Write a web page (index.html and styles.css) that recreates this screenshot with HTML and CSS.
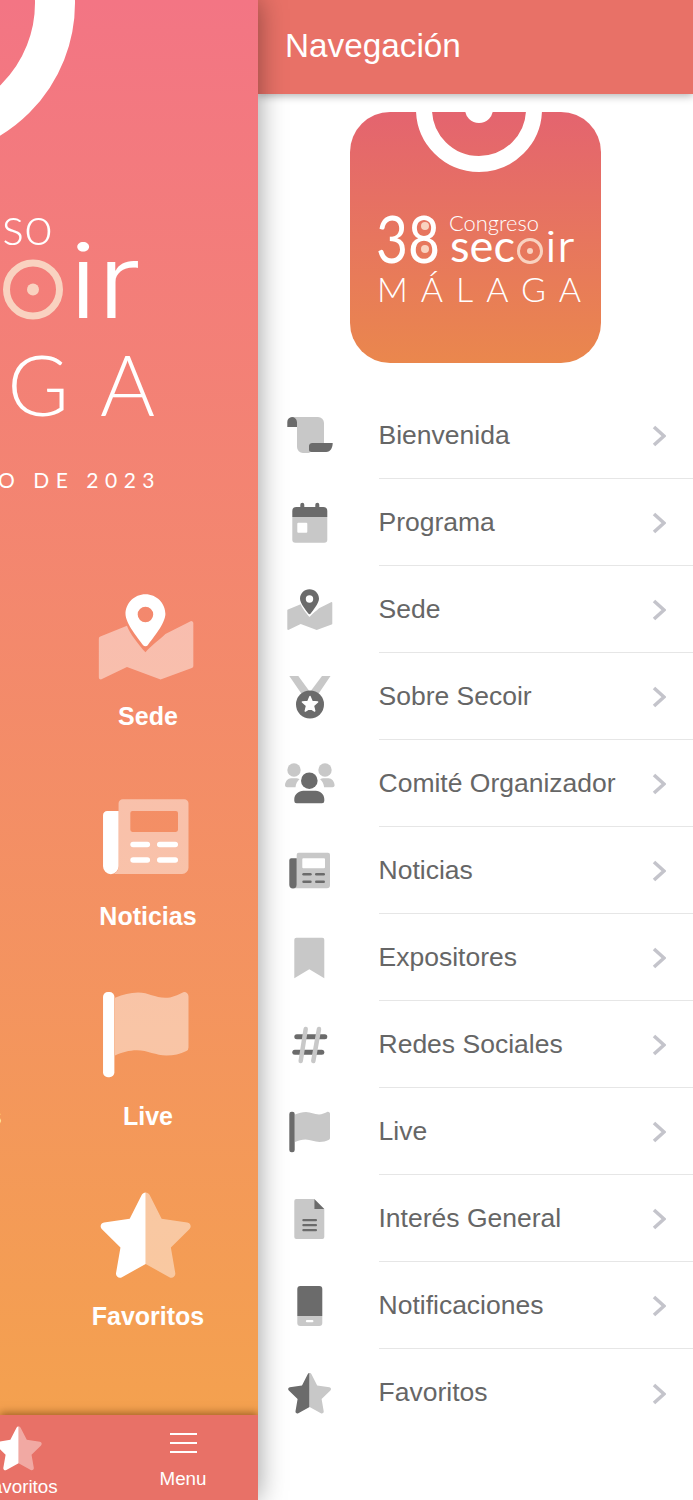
FILE: index.html
```html
<!DOCTYPE html>
<html lang="es">
<head>
  <meta charset="UTF-8">
  <meta name="viewport" content="width=device-width, initial-scale=1.0">
  <title>38 Congreso Secoir</title>
  <link rel="stylesheet" href="styles.css">
</head>
<body>

<svg class="sprites" width="0" height="0" aria-hidden="true">
  <symbol id="i-scroll" viewBox="0 0 50 50">
    <path class="light" d="M7 7h26a6 6 0 0 1 6 6v20H27a3 3 0 0 0-3 3v3a2.600 2.600 0 0 0 2 2.700c-1 .8-2 1.300-4 1.300h-4a6 6 0 0 1-6-6V12a5 5 0 0 0-5-5z"/>
    <path class="dark" d="M27 33h20.700c0 4.500-2 9-6.500 9H26.500a2.600 2.600 0 0 1-2.500-3v-3a3 3 0 0 1 3-3z"/>
    <path class="dark" d="M7 7a5 5 0 0 1 5 5v5H2.300v-5A5 5 0 0 1 7 7z"/>
  </symbol>
  <symbol id="i-calendar" viewBox="0 0 50 50">
    <path class="light" fill-rule="evenodd" d="M7.300 20h35v22.700a3 3 0 0 1-3 3h-29a3 3 0 0 1-3-3zM13.300 25.700a1 1 0 0 0-1 1v8a1 1 0 0 0 1 1h8a1 1 0 0 0 1-1v-8a1 1 0 0 0-1-1z"/>
    <path class="dark" d="M7.300 20v-6a4 4 0 0 1 4-4h4V7.700a2 2 0 0 1 4 0V10h11V7.700a2 2 0 0 1 4 0V10h4a4 4 0 0 1 4 4v6z"/>
  </symbol>
  <symbol id="i-map" viewBox="0 0 50 50">
    <path class="light" d="M3 25.500l12.700-5.200c1.300 3.700 5.300 8.700 8.800 12.700 3.500-4 7-6 9.500-8.700l12-6.100a1 1 0 0 1 1.300 1v20.300a1 1 0 0 1-.7 1L31.700 46l-16-6-12.400 6a1 1 0 0 1-1-1V26.500a1 1 0 0 1 .7-1z"/>
    <path class="dark" fill-rule="evenodd" d="M24.500 5.300c5.300 0 9.500 4.200 9.500 9.500 0 4.500-6.300 12-8.300 14.700a1.500 1.500 0 0 1-2.400 0C21.300 26.800 15 19.300 15 14.800c0-5.300 4.200-9.500 9.500-9.500zM24.500 11.300a3.700 3.700 0 1 0 0 7.400 3.700 3.700 0 0 0 0-7.400z"/>
  </symbol>
  <symbol id="i-medal" viewBox="0 0 50 50">
    <path class="light" d="M4.300 5h9L25 21 37 5h8.500L32 25H18z"/>
    <circle class="dark" cx="25" cy="33.500" r="14"/>
    <polygon fill="#fff" stroke="#fff" stroke-width="1.500" stroke-linejoin="round" points="25,25.500 27.100,30.600 32.600,31 28.400,34.600 29.700,40 25,37.100 20.300,40 21.600,34.600 17.400,31 22.900,30.600"/>
  </symbol>
  <symbol id="i-people" viewBox="0 0 50 50">
    <circle class="light" cx="9" cy="12" r="6.700"/>
    <circle class="light" cx="40" cy="12" r="6.700"/>
    <path class="light" d="M0 27.500c0-4 3-7.200 6-7.200h5.500c1 0 2 .5 3 1-2 1.500-3.700 4.500-4 8H2a2 2 0 0 1-2-1.800z"/>
    <path class="light" d="M49.600 27.500c0-4-3-7.200-6-7.200h-5.500c-1 0-2 .5-3 1 2 1.500 3.700 4.500 4 8h8.500a2 2 0 0 0 2-1.800z"/>
    <circle class="dark" cx="24.300" cy="22.700" r="8.300"/>
    <path class="dark" d="M9.300 43a2.300 2.300 0 0 0 2.300 2.300H37a2.300 2.300 0 0 0 2.300-2.300v-2c0-4.500-4-8.300-8.500-8.300H18.300c-4.500 0-9 3.800-9 8.300z"/>
  </symbol>
  <symbol id="i-news" viewBox="0 0 50 50">
    <path class="light" fill-rule="evenodd" d="M13.700 7.700H43a2 2 0 0 1 2 2v30.600a3 3 0 0 1-3 3H9.500c1.400-.8 2.200-2 2.200-3.500V9.700a2 2 0 0 1 2-2zM18.300 13.300a1 1 0 0 0-1 1v8a1 1 0 0 0 1 1H39a1 1 0 0 0 1-1v-8a1 1 0 0 0-1-1z"/>
    <path class="dark" d="M6.300 13.300h5.400v26.400a3.700 3.700 0 0 1-7.400 0V15.300a2 2 0 0 1 2-2z"/>
    <rect class="dark" x="17.300" y="28" width="9.400" height="2.600" rx="1.300"/>
    <rect class="dark" x="30" y="28" width="10" height="2.600" rx="1.300"/>
    <rect class="dark" x="17.300" y="35.400" width="9.400" height="2.600" rx="1.300"/>
    <rect class="dark" x="30" y="35.400" width="10" height="2.600" rx="1.300"/>
  </symbol>
  <symbol id="i-bookmark" viewBox="0 0 50 50">
    <path class="light" d="M11.300 5.700h26a2 2 0 0 1 2 2v38.600L24.300 37.300 9.300 46.300V7.700a2 2 0 0 1 2-2z"/>
  </symbol>
  <symbol id="i-hash" viewBox="0 0 50 50">
    <rect class="dark" x="9.300" y="15.200" width="33" height="5" rx="2.500"/>
    <rect class="dark" x="7.300" y="30.800" width="32" height="5" rx="2.500"/>
    <line class="light-line" x1="20.700" y1="10" x2="15.700" y2="42"/>
    <line class="light-line" x1="34" y1="10" x2="28.300" y2="42"/>
  </symbol>
  <symbol id="i-flag" viewBox="0 0 50 50">
    <path class="light" d="M10 8.500c4-1.500 7-2.500 11-2.500 5 0 8 2.500 13 2.500 3 0 6-1.500 8.500-2.700a2 2 0 0 1 2.500 2V32a2 2 0 0 1-1 1.800c-3 1.500-6 2.200-9.500 2.200-5 0-9-2.500-14-2.500-4 0-7 1-10.500 2.500z"/>
    <rect class="dark" x="4.300" y="5.700" width="5.400" height="40.600" rx="2.300"/>
  </symbol>
  <symbol id="i-doc" viewBox="0 0 50 50">
    <path class="light" d="M11.300 6h18v10h10v28a2 2 0 0 1-2 2h-26a2 2 0 0 1-2-2V8a2 2 0 0 1 2-2z"/>
    <path class="dark" d="M29.300 6l10 10h-10z"/>
    <rect class="dark" x="17.300" y="26" width="14.700" height="2.200" rx="1"/>
    <rect class="dark" x="17.300" y="31" width="14.700" height="2.200" rx="1"/>
    <rect class="dark" x="17.300" y="36" width="14.700" height="2.200" rx="1"/>
  </symbol>
  <symbol id="i-phone" viewBox="0 0 50 50">
    <path class="dark" d="M15.300 6h19a3 3 0 0 1 3 3v27h-25V9a3 3 0 0 1 3-3z"/>
    <path class="light" fill-rule="evenodd" d="M12.300 36h25v7a3 3 0 0 1-3 3h-19a3 3 0 0 1-3-3zM22 40a1 1 0 0 0 0 2.300h5.300a1 1 0 0 0 0-2.300z"/>
  </symbol>
  <symbol id="i-star" viewBox="0 0 50 50">
    <path class="dark" d="M24.600 6c-.8 0-1.500.5-1.900 1.200L17 18.400 4.800 20.200c-1.600.2-2.200 2.200-1 3.300l8.800 8.600-2.100 12.200c-.3 1.600 1.400 2.800 2.800 2L24.600 40z"/>
    <path class="light" d="M24.600 6c.8 0 1.500.5 1.900 1.200l5.700 11.200 12.200 1.800c1.600.2 2.200 2.200 1 3.300l-8.800 8.600 2.100 12.200c.3 1.600-1.400 2.800-2.800 2L24.600 40z"/>
  </symbol>
</svg>

<aside class="home">
  <div class="home-main">
    <svg class="home-logo" viewBox="0 0 258 510">
      <circle class="logo-arc" cx="-80" cy="3" r="135" stroke-width="40"/>
      <text class="logo-thin" x="-160" y="245" font-size="54" textLength="213" lengthAdjust="spacingAndGlyphs">Congreso</text>
      <text class="logo-mid" x="-157" y="318" font-size="110" textLength="159" lengthAdjust="spacingAndGlyphs">sec</text>
      <circle class="logo-ring" cx="33" cy="289.500" r="26.500" stroke-width="7"/>
      <circle class="logo-dot" cx="33" cy="289.500" r="6"/>
      <text class="logo-round" x="69" y="318" font-size="103" textLength="72" lengthAdjust="spacingAndGlyphs">ir</text>
      <text class="logo-thin" x="-345" y="416" font-size="84" textLength="500">MÁLAGA</text>
      <text class="logo-date" x="161" y="488" font-size="21" text-anchor="end">JUNIO DE 2023</text>
    </svg>
    <div class="tiles">
      <div class="tile"><div class="tile-icon"></div><span class="tile-label">Sobre Secoir</span></div>
      <div class="tile"><svg class="tile-icon"><use href="#i-map"/></svg><span class="tile-label">Sede</span></div>
      <div class="tile"><div class="tile-icon"></div><span class="tile-label">Interés General</span></div>
      <div class="tile"><svg class="tile-icon"><use href="#i-news"/></svg><span class="tile-label">Noticias</span></div>
      <div class="tile"><div class="tile-icon"></div><span class="tile-label">Redes Sociales</span></div>
      <div class="tile"><svg class="tile-icon tile-icon-up"><use href="#i-flag"/></svg><span class="tile-label">Live</span></div>
      <div class="tile"><div class="tile-icon"></div><span class="tile-label">Notificaciones</span></div>
      <div class="tile"><svg class="tile-icon tile-icon-up"><use href="#i-star"/></svg><span class="tile-label">Favoritos</span></div>
    </div>
  </div>
  <nav class="tabs">
    <div class="tab">
      <svg class="tab-star"><use href="#i-star"/></svg>
      <span>Favoritos</span>
    </div>
    <div class="tab">
      <div class="tab-burger"><i></i><i></i><i></i></div>
      <span>Menu</span>
    </div>
  </nav>
</aside>

<section class="drawer">
  <header class="drawer-head">Navegación</header>

  <svg class="drawer-logo" viewBox="0 0 251 251">
    <circle class="logo-arc" cx="129" cy="-3" r="55" stroke-width="16"/>
    <circle class="logo-fill" cx="129" cy="-3" r="14"/>
    <text class="logo-mid" x="26" y="151" font-size="66" textLength="64" lengthAdjust="spacingAndGlyphs">38</text>
    <circle class="logo-dot" cx="75" cy="114" r="4"/>
    <circle class="logo-dot" cx="75" cy="137" r="4"/>
    <text class="logo-thin" x="99" y="119" font-size="22" textLength="90" lengthAdjust="spacingAndGlyphs">Congreso</text>
    <text class="logo-mid" x="100" y="150" font-size="44" textLength="65" lengthAdjust="spacingAndGlyphs">sec</text>
    <circle class="logo-ring" cx="180" cy="139" r="11.500" stroke-width="3"/>
    <circle class="logo-dot" cx="180" cy="139" r="3"/>
    <text class="logo-round" x="195" y="150" font-size="42" textLength="30" lengthAdjust="spacingAndGlyphs">ir</text>
    <text class="logo-thin" x="27" y="190" font-size="34" textLength="204">MÁLAGA</text>
  </svg>

  <ul class="menu">
    <li class="menu-row"><svg class="menu-icon"><use href="#i-scroll"/></svg><div class="menu-body"><span>Bienvenida</span><svg class="chev" viewBox="0 0 14 22"><polyline points="2,2 12,11 2,20"/></svg></div></li>
    <li class="menu-row"><svg class="menu-icon"><use href="#i-calendar"/></svg><div class="menu-body"><span>Programa</span><svg class="chev" viewBox="0 0 14 22"><polyline points="2,2 12,11 2,20"/></svg></div></li>
    <li class="menu-row"><svg class="menu-icon"><use href="#i-map"/></svg><div class="menu-body"><span>Sede</span><svg class="chev" viewBox="0 0 14 22"><polyline points="2,2 12,11 2,20"/></svg></div></li>
    <li class="menu-row"><svg class="menu-icon"><use href="#i-medal"/></svg><div class="menu-body"><span>Sobre Secoir</span><svg class="chev" viewBox="0 0 14 22"><polyline points="2,2 12,11 2,20"/></svg></div></li>
    <li class="menu-row"><svg class="menu-icon"><use href="#i-people"/></svg><div class="menu-body"><span>Comité Organizador</span><svg class="chev" viewBox="0 0 14 22"><polyline points="2,2 12,11 2,20"/></svg></div></li>
    <li class="menu-row"><svg class="menu-icon"><use href="#i-news"/></svg><div class="menu-body"><span>Noticias</span><svg class="chev" viewBox="0 0 14 22"><polyline points="2,2 12,11 2,20"/></svg></div></li>
    <li class="menu-row"><svg class="menu-icon"><use href="#i-bookmark"/></svg><div class="menu-body"><span>Expositores</span><svg class="chev" viewBox="0 0 14 22"><polyline points="2,2 12,11 2,20"/></svg></div></li>
    <li class="menu-row"><svg class="menu-icon"><use href="#i-hash"/></svg><div class="menu-body"><span>Redes Sociales</span><svg class="chev" viewBox="0 0 14 22"><polyline points="2,2 12,11 2,20"/></svg></div></li>
    <li class="menu-row"><svg class="menu-icon"><use href="#i-flag"/></svg><div class="menu-body"><span>Live</span><svg class="chev" viewBox="0 0 14 22"><polyline points="2,2 12,11 2,20"/></svg></div></li>
    <li class="menu-row"><svg class="menu-icon"><use href="#i-doc"/></svg><div class="menu-body"><span>Interés General</span><svg class="chev" viewBox="0 0 14 22"><polyline points="2,2 12,11 2,20"/></svg></div></li>
    <li class="menu-row"><svg class="menu-icon"><use href="#i-phone"/></svg><div class="menu-body"><span>Notificaciones</span><svg class="chev" viewBox="0 0 14 22"><polyline points="2,2 12,11 2,20"/></svg></div></li>
    <li class="menu-row"><svg class="menu-icon"><use href="#i-star"/></svg><div class="menu-body"><span>Favoritos</span><svg class="chev" viewBox="0 0 14 22"><polyline points="2,2 12,11 2,20"/></svg></div></li>
  </ul>
</section>

</body>
</html>
```

FILE: styles.css
```css
body {
    margin: 0;
    height: 1500px;
    display: flex;
    overflow: hidden;
    background: #fff;
    font-family: "Liberation Sans", Arial, sans-serif;
}

.sprites {
    position: absolute;
}

/* duotone icon colours, the symbols pick these up through <use> */
.light { fill: var(--icon-light); }
.dark { fill: var(--icon-dark); }
.light-line {
    stroke: var(--icon-light);
    stroke-width: 4.5;
    stroke-linecap: round;
}

/* logo */
.logo-arc {
    fill: none;
    stroke: #fff;
}

.logo-fill { fill: #fff; }
.logo-dot { fill: #f9d2c0; }

.logo-ring {
    fill: none;
    stroke: #f9d2c0;
}

.logo-thin,
.logo-mid,
.logo-date {
    fill: #fff;
    font-family: Lato, "Liberation Sans", sans-serif;
}

.logo-thin { font-weight: 300; }
.logo-mid { font-weight: 400; }

.logo-round {
    fill: #fff;
    font-family: Inter, "Liberation Sans", sans-serif;
    font-weight: 300;
}

.logo-date {
    font-weight: 400;
    letter-spacing: 6.5px;
}

/* left: home screen, pushed aside by the drawer */
.home {
    --icon-light: rgba(255, 255, 255, 0.45);
    --icon-dark: #fff;
    position: relative;
    z-index: 1;
    width: 258px;
    flex-shrink: 0;
    display: flex;
    flex-direction: column;
    overflow: hidden;
    box-shadow: 0 0 26px rgba(0, 0, 0, 0.4);
}

.home-main {
    flex: 1;
    background: linear-gradient(to bottom, #f37584, #f4a14f);
}

.home-logo {
    display: block;
    width: 258px;
    height: 510px;
    margin-bottom: 73px;
}

.tiles {
    display: grid;
    grid-template-columns: 220px 220px;
    justify-content: end;
    column-gap: 18px;
    row-gap: 52px;
}

.tile {
    display: flex;
    flex-direction: column;
    align-items: center;
}

.tile-icon {
    display: block;
    width: 105px;
    height: 105px;
    margin: 0 4px 13px 0;
}

.tile-icon-up {
    transform: translateY(-3px);
}

.tile-label {
    font-size: 25px;
    line-height: 30px;
    font-weight: 700;
    color: #fff;
    white-space: nowrap;
}

.tabs {
    height: 85px;
    flex-shrink: 0;
    display: flex;
    justify-content: flex-end;
    gap: 14px;
    background: #e87167;
    box-shadow: 0 -2px 8px rgba(90, 40, 0, 0.55);
}

.tab {
    --icon-light: rgba(255, 255, 255, 0.4);
    width: 150px;
    flex-shrink: 0;
    display: flex;
    flex-direction: column;
    align-items: center;
    justify-content: center;
    gap: 7px;
    padding-top: 8px;
    box-sizing: border-box;
    color: #fff;
    font-size: 18.8px;
    line-height: 22px;
    white-space: nowrap;
}

.tab-star {
    width: 54px;
    height: 54px;
    margin: -5px 0;
}

.tab-burger {
    width: 27px;
    height: 20px;
    margin-bottom: 8px;
    display: flex;
    flex-direction: column;
    justify-content: space-between;
}

.tab-burger i {
    display: block;
    height: 2px;
    background: #fff;
}

/* right: navigation drawer */
.drawer {
    --icon-light: #c8c8c8;
    --icon-dark: #6b6b6b;
    flex: 1;
    min-width: 0;
}

.drawer-head {
    height: 94px;
    padding: 0 0 3px 27px;
    box-sizing: border-box;
    display: flex;
    align-items: center;
    background: #e87167;
    color: #fff;
    font-size: 33.3px;
    box-shadow: 0 2px 8px rgba(0, 0, 0, 0.3);
}

.drawer-logo {
    display: block;
    width: 251px;
    height: 251px;
    margin: 18px auto 29px;
    border-radius: 40px;
    background: linear-gradient(to bottom, #e4646f, #ea874d);
}

.menu {
    list-style: none;
    margin: 0;
    padding: 0;
}

.menu-row {
    display: flex;
    align-items: center;
    padding-left: 27px;
}

.menu-icon {
    width: 50px;
    height: 50px;
    flex-shrink: 0;
    margin: -2px 43.5px 0 0;
}

.menu-body {
    flex: 1;
    height: 87px;
    padding-right: 27px;
    box-sizing: border-box;
    display: flex;
    align-items: center;
    justify-content: space-between;
    border-bottom: 1px solid #e6e6e6;
    color: #666;
    font-size: 26.5px;
}

.menu-row:last-child .menu-body {
    border-bottom: 0;
}

.chev {
    width: 14px;
    height: 22px;
    margin-top: 2px;
    fill: none;
    stroke: #c4c4cb;
    stroke-width: 3.6;
}
```
